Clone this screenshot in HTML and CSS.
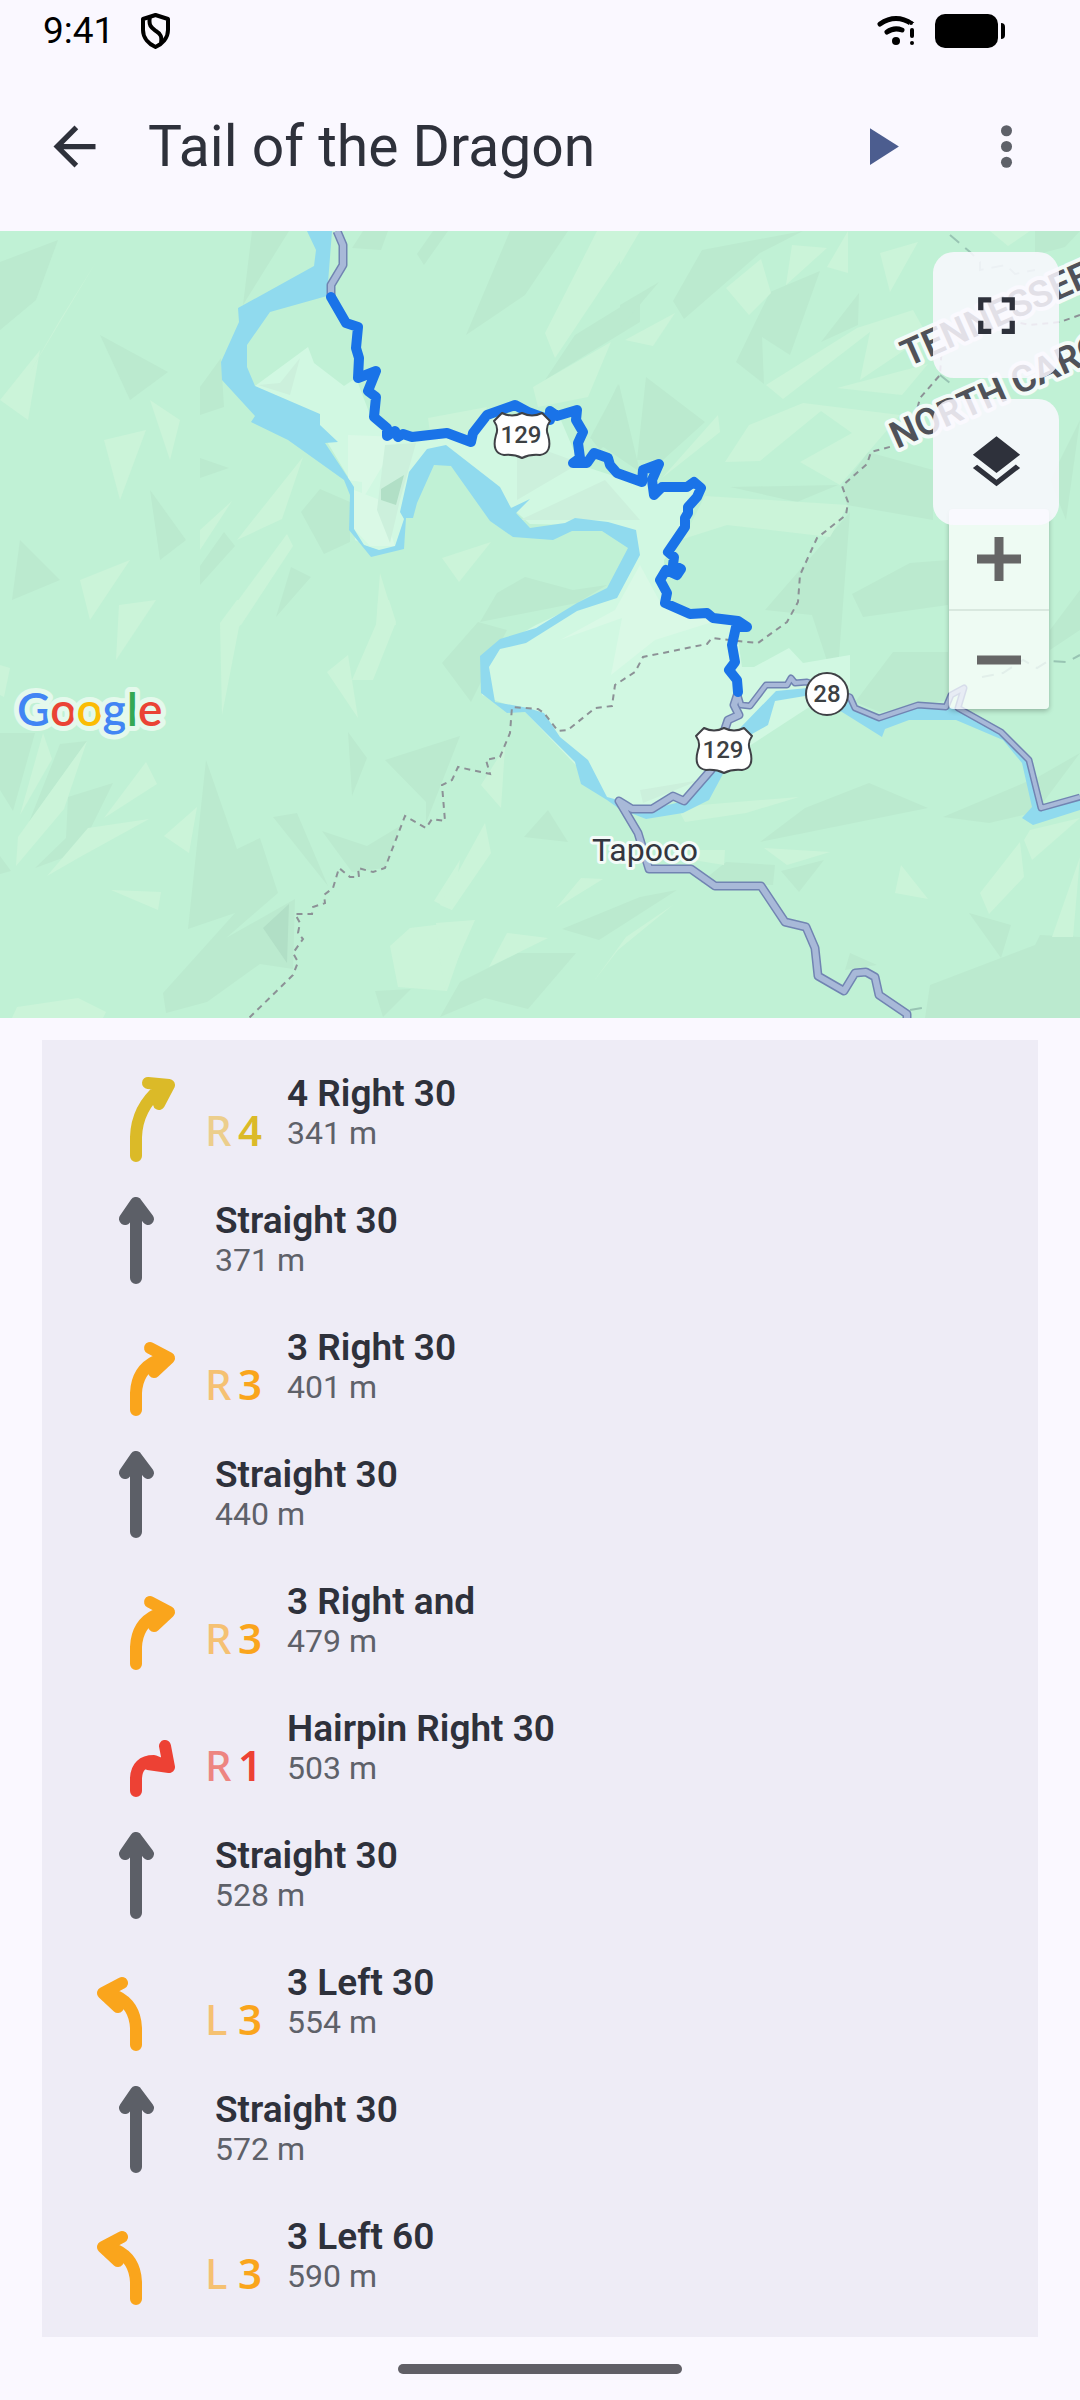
FILE: index.html
```
<!DOCTYPE html>
<html lang="en">
<head>
    <meta charset="UTF-8">
    <meta name="viewport" content="width=device-width, initial-scale=1.0">
    <title>Tail of the Dragon</title>
    <link rel="stylesheet" href="styles.css">
</head>
<body>
    <div class="status-bar">
        <span class="time">9:41</span>
        <svg class="shield-icon" width="31" height="36" viewBox="0 0 31 36">
            <path d="M15.500 2L28 6V17C28 25 22 31 15.500 34C9 31 3 25 3 17V6Z M10 4C8 13 12 15 16 18C21 21 22 24 21 30" fill="none" stroke="#000" stroke-width="4" stroke-linejoin="round"/>
        </svg>
        <div class="status-right">
            <svg width="40" height="34" viewBox="0 0 40 34">
                <path d="M4 10Q20 -1 36 10" fill="none" stroke="#000" stroke-width="5" stroke-linecap="round"/>
                <path d="M11 18Q18 13 26 16" fill="none" stroke="#000" stroke-width="5" stroke-linecap="round"/>
                <circle cx="20" cy="27" r="4"/>
                <path d="M33 9h9v23h-9z" fill="#faf8ff"/>
                <path d="M36 16V22" stroke="#000" stroke-width="4" stroke-linecap="round"/>
                <circle cx="36" cy="29" r="2"/>
                <circle cx="35" cy="9" r="2"/>
            </svg>
            <div class="battery"></div>
            <div class="battery-tip"></div>
        </div>
    </div>

    <header class="app-bar">
        <button class="bar-btn" aria-label="Back">
            <svg viewBox="0 0 24 24" fill="#2e313b"><path d="M20 11H7.830l5.590-5.590L12 4l-8 8 8 8 1.410-1.410L7.830 13H20v-2z"/></svg>
        </button>
        <h1>Tail of the Dragon</h1>
        <button class="bar-btn" aria-label="Play">
            <svg viewBox="0 0 24 24" fill="#4c5d8f"><path d="M8 5v14l11-7z"/></svg>
        </button>
        <button class="bar-btn more" aria-label="More options">
            <svg viewBox="0 0 24 24" fill="#5e6169"><circle cx="12" cy="6" r="2.100"/><circle cx="12" cy="12" r="2.100"/><circle cx="12" cy="18" r="2.100"/></svg>
        </button>
    </header>

    <div class="map">
        <svg class="map-canvas" viewBox="0 231 1080 787" preserveAspectRatio="xMidYMid slice">
            <!-- terrain -->
            <path class="dark" d="M252 231H289L243 305ZM363 231H388L381 250L352 248ZM433 231H448L424 265L417 254ZM510 231H568L525 295L466 335ZM640 295V322L545 380L575 335ZM619 384L640 472L590 438ZM200 387L221 358L224 407L200 415ZM320 489L350 502V542L324 554L301 512ZM291 567L311 577L276 617ZM525 577L573 590L607 585L577 603L480 622L497 593ZM200 566L224 532L235 546L200 585ZM200 458L229 468L200 478Z"/>
            <path class="dark" d="M0 733H35L13 811L0 790ZM60 744L87 741L29 822ZM68 797L113 783L79 852L35 868L66 838ZM206 760L237 849L260 838L278 893L226 938L235 913L188 929ZM295 899L293 969L260 964L207 1002L166 1013L163 993L235 913L226 938ZM273 817L297 813L328 886ZM322 831L367 846L400 826L385 868L352 872ZM348 732L367 758L352 796ZM385 760L460 736L426 823V802ZM375 991L411 989L383 1017ZM0 856L11 871L0 874Z"/>
            <path class="dark" d="M478 622L507 630L471 702L442 663ZM869 783L928 808L760 842L805 808ZM1080 753L1038 777L943 817L989 823L1036 812ZM726 862L775 865L773 885L700 883ZM781 871L824 860L799 892ZM640 897L677 890L599 940L562 929ZM518 953H576L528 1009L485 998L440 1017L460 982ZM969 913L1011 925L1001 958ZM1040 935L1080 937V1018H925L930 985L1035 945ZM850 953L877 965L845 970ZM893 652L948 652V700L880 712L855 702ZM548 810L524 837L568 842Z"/>
            <path class="dark" d="M702 250L803 231L760 253L684 319L673 301ZM620 305L659 282L620 328ZM820 271L790 355L762 337L764 384L736 362L770 292ZM859 293L858 325L821 342ZM646 377L705 422L663 460H637ZM618 384L610 440L600 450L592 440ZM730 487L838 485L797 502ZM868 452L933 470V520L847 505L842 488ZM850 512L765 610L812 615L830 670H838ZM852 594L910 563L948 560V605L863 617ZM1035 231H1080L1065 247L1035 255ZM1080 420L1066 520L1050 480ZM1080 590V630L1050 650V630Z"/>
            <path class="dark" d="M0 262L58 240L36 300L0 330ZM100 335L168 372L130 400ZM150 490L186 540L160 560ZM20 540L60 580L12 600Z"/>
            <path class="light" d="M597 231H640L555 358L545 333ZM533 387L611 342L588 397L538 407ZM232 501L200 550V530ZM303 457L282 519L237 540ZM287 534L293 546L241 625H220ZM442 558L491 542L459 582ZM380 573L396 625H376ZM428 418L487 407L470 440L430 432Z"/>
            <path class="light" d="M119 605L156 600L116 660ZM237 600H257L239 627L222 715L220 623ZM378 600H389L396 622L373 680H352L377 622ZM327 672L348 655L358 718ZM43 733L52 759L20 815ZM87 741L64 809L16 866L18 837ZM146 762L157 784L104 818ZM149 819L80 857L47 876L88 828ZM197 807L189 853L164 836ZM111 890L161 892L158 910ZM460 860L452 910L434 901ZM410 928L460 922V953L447 991L398 987L390 946ZM17 1007L78 998L106 1012L103 1018H12ZM0 665L10 668L4 697L0 695Z"/>
            <path class="light" d="M677 807L799 797L746 813L685 822ZM764 848L830 852L787 865ZM691 850H725L724 865L693 860ZM901 865L928 899L895 893ZM1020 842L1024 877L989 914L980 893ZM1030 830L1080 818L1032 860L1024 840ZM1080 857L1073 937H1052ZM485 823L491 853L452 910L440 905ZM673 905L618 950L594 981L626 937ZM475 920L444 990L436 923ZM603 879L556 908L581 878ZM505 747L481 785L501 808ZM507 933L548 938L489 967Z"/>
            <path class="light" d="M792 245L827 248L786 285ZM880 253L918 242L890 292ZM761 259L771 293L749 315L726 288ZM848 231V273L827 267ZM675 313L653 346L625 340ZM766 385L857 328L913 310L927 335L860 380L870 332L783 399ZM837 388L928 364L902 395ZM725 462L749 425L803 403L900 415L840 485L800 462L852 433L821 411L760 461ZM718 415L720 432L662 478ZM705 496L848 505L830 537L727 525L683 539ZM620 231H640L620 265ZM990 231H1030L1008 246Z"/>
            <path class="light" d="M0 400L40 350L28 420ZM96 262L60 320L30 372ZM104 440L146 430L120 500ZM150 400L180 420L170 460ZM80 580L130 560L90 620Z"/>

            <!-- valley -->
            <path class="valley" d="M255 386L308 347L314 363L344 386L356 378L372 420L400 437H470L490 418H560L580 465L620 478L702 488L685 530L664 560L665 603L735 618L742 667L754 667L789 648L803 663L850 655V690L820 700L720 765L680 800L640 812L615 806L525 712L482 695V656L536 625L610 590L635 550L630 530L575 525L530 524L446 450L430 455L405 515L400 548L380 553L355 540L350 480L320 430Z"/>
            <path class="valley-light" d="M348 435L400 437L380 470L362 500V482L348 480ZM354 490L380 500L395 546H370L354 529ZM640 565L615 610L560 640L622 618L611 675L655 640L725 618L660 602Z"/>
            <path class="valley-dark" d="M300 358L290 395L258 385L280 383ZM517 440L580 463L517 500ZM605 480L640 520H520ZM700 780L643 803L640 790ZM385 445L416 443L400 500L390 543L377 510Z"/>
            <path class="darker" d="M289 904L287 963L263 928ZM404 475L396 505L381 500V489Z"/>

            <!-- water -->
            <path class="water" d="M307 231L316 250L314 266L238 308L239 322L221 362L222 380L255 416L251 422L288 440L344 480L350 495L349 530L371 557L404 549L406 518L413 518L417 503L434 465L451 466L490 521L513 537L553 540L572 531H602L628 548L607 588L577 603L536 628L500 639L480 656L481 693L507 713L525 712L575 762L581 784L607 800L618 808V800L607 797L588 760L560 737L544 713L528 708L495 702L489 667L500 649L526 643L577 611L617 598L640 555L636 530L608 522L575 518L565 523L530 528L516 513L530 499L511 508L500 487L446 445L427 449L409 472L400 512L404 519L395 546L379 550L364 545L354 529V487L343 470L325 443L338 442L320 425V414L255 386L247 367V345L270 312L327 296L332 231Z"/>
            <path class="water" d="M628 812L646 819L683 813L709 800L724 772L752 734L768 725L775 701L805 696L842 712L882 737L885 729L909 720H956L1003 740L1022 763L1032 807L1022 818L1033 825L1080 810V797L1041 808L1029 760L1001 732L958 708L918 705L879 718L855 708L846 688H808L776 691L741 727L711 770L684 801L652 809Z"/>

            <!-- state line -->
            <path class="border" d="M1080 315L1060 322L1030 325L1005 320L942 345L940 375L920 398L917 410L893 446L871 452L867 464L842 486L848 502L846 515L817 538L800 575L798 602L787 622L758 643L738 641L712 638L707 644L643 657L635 672L615 685L612 706L595 708L568 730L558 731L544 713L538 709L512 707L510 733L500 757L486 760L490 774L458 767L452 780L442 785L445 821L432 819L426 828L405 816L385 868L373 872L358 868L359 877H350L339 868L333 888L324 895L325 903L313 907L312 914H295L300 923L298 933L303 939L293 953L298 962L293 975L248 1019"/>
            <path class="trail" d="M950 235L970 252L980 262V270L1006 265L1015 274L1035 270M940 375L955 387M982 677L1003 673L1023 660L1037 668L1048 661L1067 662L1080 655M910 1010L928 1007"/>

            <!-- roads -->
            <path class="road-edge thin" d="M738 695L741 705L750 706L766 685H787L791 678L795 683L807 682L850 697L855 708L879 718L918 705L946 707L951 695L964 688L958 708L1001 732L1029 760L1041 808L1080 797"/>
            <path class="road-edge" d="M337 231L343 245V265L331 285V297M738 693L734 705L739 715L728 720L711 770L684 801L673 796L652 809H632L619 801L638 833L649 869H691L715 886H761L785 922L806 927L815 948L818 976L844 991L855 973L866 972L875 977L879 995L907 1014V1020"/>
            <path class="road thin" d="M738 695L741 705L750 706L766 685H787L791 678L795 683L807 682L850 697L855 708L879 718L918 705L946 707L951 695L964 688L958 708L1001 732L1029 760L1041 808L1080 797"/>
            <path class="road" d="M337 231L343 245V265L331 285V297M738 693L734 705L739 715L728 720L711 770L684 801L673 796L652 809H632L619 801L638 833L649 869H691L715 886H761L785 922L806 927L815 948L818 976L844 991L855 973L866 972L875 977L879 995L907 1014V1020"/>

            <!-- route -->
            <path class="route" d="M331 297L346 323L358 327L356 348L359 358L358 378L376 371L368 391L376 397L374 417L387 428V436L395 431L398 437L403 434L412 437L447 433L471 442L473 433L487 415L515 405L528 412L550 420V411L557 416L577 410L576 420L583 432L578 443L580 458L573 463H587L594 453L608 458L610 465L617 473L642 482L643 470L659 464L652 480L654 495L662 487H687L694 482L701 488L697 497L688 507V513L685 518V527L668 552L674 557L673 565L681 569L677 575L666 570L660 580L667 593L665 603L690 614L707 613L713 618L738 621L747 627H736L732 645L735 662L729 670L737 680L738 692"/>

            <!-- highway shields -->
            <g>
                <path class="sign" d="M502 413Q512 418 522 413Q532 418 542 413L550 421Q545 428 548 435Q553 453 540 455Q530 454 522 458Q514 454 504 455Q491 453 496 435Q499 428 494 421Z"/>
                <text class="sign-text" x="521" y="443">129</text>
            </g>
            <g transform="translate(202 315)">
                <path class="sign" d="M502 413Q512 418 522 413Q532 418 542 413L550 421Q545 428 548 435Q553 453 540 455Q530 454 522 458Q514 454 504 455Q491 453 496 435Q499 428 494 421Z"/>
                <text class="sign-text" x="521" y="443">129</text>
            </g>
            <circle class="sign" cx="827" cy="694" r="21"/>
            <text class="sign-text" x="827" y="702">28</text>

            <text class="place" x="592" y="861">Tapoco</text>
            <text class="state" transform="translate(908 367) rotate(-24)">TENNESSEE</text>
            <text class="state" transform="translate(897 449) rotate(-24)">NORTH CAROLINA</text>
            <text class="google" x="17" y="726"><tspan fill="#4285f4">G</tspan><tspan fill="#ea4335">o</tspan><tspan fill="#fbbc05">o</tspan><tspan fill="#4285f4">g</tspan><tspan fill="#34a853">l</tspan><tspan fill="#ea4335">e</tspan></text>
        </svg>

        <div class="zoom-control">
            <button aria-label="Zoom in"><svg width="44" height="44" viewBox="0 0 44 44"><path d="M0 22H44M22 0V44" stroke="#666" stroke-width="9"/></svg></button>
            <button aria-label="Zoom out"><svg width="44" height="44" viewBox="0 0 44 44"><path d="M0 22H44" stroke="#666" stroke-width="9"/></svg></button>
        </div>
        <div class="map-actions">
            <button aria-label="Full screen">
                <svg viewBox="0 0 24 24" fill="#2e313b"><path d="M7 14H5v5h5v-2H7v-3zM5 10h2V7h3V5H5v5zM17 17h-3v2h5v-5h-2v3zM14 5v2h3v3h2V5h-5z"/></svg>
            </button>
            <button aria-label="Map layers">
                <svg viewBox="0 0 24 24" fill="#2e313b"><path d="M11.990 18.540l-7.370-5.730L3 14.070l9 7 9-7-1.630-1.270zM12 16l7.360-5.730L21 9l-9-7-9 7 1.630 1.270z"/></svg>
            </button>
        </div>
    </div>

    <!-- arrows shared by the pace notes -->
    <svg class="defs" width="0" height="0">
        <symbol id="straight" viewBox="0 0 96 127"><path d="M48 101V26M37 42L48 26L60 42M42 36H54"/></symbol>
        <symbol id="turn4" viewBox="0 0 96 127"><path d="M48 106V87Q49 58 72 39L81 35M60 33L81 35L71 54L69 42"/></symbol>
        <symbol id="turn3" viewBox="0 0 96 127"><path d="M48 106V89Q49 66 68 57L81 54M62 44L81 54L66 68V60"/></symbol>
        <symbol id="turn1" viewBox="0 0 96 127"><path d="M48 106V93Q49 76 66 76L81 82M77 61L81 82L60 79"/></symbol>
    </svg>

    <ul class="notes">
        <li class="yellow">
            <svg class="arrow"><use href="#turn4"/></svg>
            <div class="badge"><span>R</span><b>4</b></div>
            <div class="info"><h2>4 Right 30</h2><p>341 m</p></div>
        </li>
        <li class="gray">
            <svg class="arrow"><use href="#straight"/></svg>
            <div class="info"><h2>Straight 30</h2><p>371 m</p></div>
        </li>
        <li class="orange">
            <svg class="arrow"><use href="#turn3"/></svg>
            <div class="badge"><span>R</span><b>3</b></div>
            <div class="info"><h2>3 Right 30</h2><p>401 m</p></div>
        </li>
        <li class="gray">
            <svg class="arrow"><use href="#straight"/></svg>
            <div class="info"><h2>Straight 30</h2><p>440 m</p></div>
        </li>
        <li class="orange">
            <svg class="arrow"><use href="#turn3"/></svg>
            <div class="badge"><span>R</span><b>3</b></div>
            <div class="info"><h2>3 Right and</h2><p>479 m</p></div>
        </li>
        <li class="red">
            <svg class="arrow"><use href="#turn1"/></svg>
            <div class="badge"><span>R</span><b>1</b></div>
            <div class="info"><h2>Hairpin Right 30</h2><p>503 m</p></div>
        </li>
        <li class="gray">
            <svg class="arrow"><use href="#straight"/></svg>
            <div class="info"><h2>Straight 30</h2><p>528 m</p></div>
        </li>
        <li class="orange">
            <svg class="arrow left"><use href="#turn3"/></svg>
            <div class="badge"><span>L</span><b>3</b></div>
            <div class="info"><h2>3 Left 30</h2><p>554 m</p></div>
        </li>
        <li class="gray">
            <svg class="arrow"><use href="#straight"/></svg>
            <div class="info"><h2>Straight 30</h2><p>572 m</p></div>
        </li>
        <li class="orange">
            <svg class="arrow left"><use href="#turn3"/></svg>
            <div class="badge"><span>L</span><b>3</b></div>
            <div class="info"><h2>3 Left 60</h2><p>590 m</p></div>
        </li>
    </ul>

    <div class="nav-bar"><div class="handle"></div></div>
</body>
</html>
```
FILE: styles.css
```
body {
    margin: 0;
    background-color: #faf8ff;
    color: #2e313b;
    font-family: Roboto, "Liberation Sans", sans-serif;
}
h1, h2, p, ul {
    margin: 0;
    padding: 0;
}
button {
    border: 0;
    padding: 0;
    background: none;
    display: flex;
    align-items: center;
    justify-content: center;
    cursor: pointer;
}
.defs {
    position: absolute;
}

/* status bar */
.status-bar {
    display: flex;
    align-items: center;
    height: 62px;
    padding: 0 75px 0 43px;
    color: #000;
}
.time {
    font-size: 37px;
    line-height: 42px;
}
.shield-icon {
    margin-left: 26px;
}
.status-right {
    display: flex;
    align-items: center;
    margin-left: auto;
}
.battery {
    width: 63px;
    height: 34px;
    margin-left: 19px;
    border-radius: 10px;
    background-color: #000;
}
.battery-tip {
    width: 4px;
    height: 16px;
    margin-left: 3px;
    border-radius: 0 4px 4px 0;
    background-color: #000;
}

/* app bar */
.app-bar {
    display: flex;
    align-items: center;
    height: 169px;
    padding: 0 42px 0 43px;
}
.app-bar h1 {
    flex: 1;
    margin-left: 42px;
    font-size: 57px;
    font-weight: 400;
    line-height: 72px;
}
.bar-btn svg {
    display: block;
    width: 63px;
    height: 63px;
}
.bar-btn.more {
    margin-left: 63px;
}

/* map */
.map {
    position: relative;
    height: 787px;
    overflow: hidden;
    background-color: #c0f1d5;
}
.map-canvas {
    display: block;
    width: 100%;
    height: 100%;
}
.dark { fill: #bbeacf; }
.darker { fill: #b1dfc6; }
.light { fill: #cbf4d9; }
.valley { fill: #d1f8e2; }
.valley-light { fill: #daf9e6; }
.valley-dark { fill: #ccf0dc; }
.water { fill: #90daee; }
.border, .trail {
    fill: none;
    stroke: #8c9196;
    stroke-width: 2;
    stroke-dasharray: 6 5;
}
.trail {
    stroke: #98c4b3;
    stroke-dasharray: 12 8;
}
.road-edge, .road, .route {
    fill: none;
    stroke-linejoin: round;
}
.road-edge {
    stroke: #7184b2;
    stroke-width: 9;
}
.road {
    stroke: #a8b9d8;
    stroke-width: 6;
}
.road-edge.thin {
    stroke-width: 7;
}
.road.thin {
    stroke-width: 4;
}
.route {
    stroke: #1a73e8;
    stroke-width: 10;
    stroke-linecap: round;
}
.sign {
    fill: #fff;
    stroke: #3f4146;
    stroke-width: 2;
    stroke-linejoin: round;
}
.sign-text {
    font-size: 24px;
    font-weight: 500;
    fill: #3c4043;
    text-anchor: middle;
}
.place, .state, .google {
    stroke: #f3fbf8;
    stroke-linejoin: round;
    paint-order: stroke;
}
.place {
    font-size: 32px;
    fill: #33363f;
    stroke-width: 6;
}
.state {
    font-size: 37px;
    font-weight: 600;
    fill: #505259;
    stroke-width: 8;
}
.google {
    font-family: Lato, sans-serif;
    font-size: 46px;
    font-weight: 600;
    stroke: #e4f9ec;
    stroke-width: 10;
}
.map-actions {
    position: absolute;
    top: 21px;
    right: 21px;
    display: flex;
    flex-direction: column;
    gap: 21px;
}
.map-actions button {
    width: 126px;
    height: 126px;
    border-radius: 21px;
    background-color: rgba(250, 248, 255, 0.86);
}
.map-actions svg {
    width: 63px;
    height: 63px;
}
.zoom-control {
    position: absolute;
    top: 278px;
    right: 31px;
    border-radius: 4px;
    background-color: rgba(255, 255, 255, 0.72);
    box-shadow: 0 2px 5px rgba(0, 0, 0, 0.25);
}
.zoom-control button {
    width: 100px;
    height: 100px;
}
.zoom-control button + button {
    border-top: 2px solid #d9e8df;
}

/* pace notes */
.notes {
    margin: 22px 42px 0;
    padding: 10px 46px 17px;
    background-color: #eeecf6;
    list-style: none;
}
.notes li {
    display: flex;
    height: 127px;
}
.arrow {
    width: 96px;
    height: 127px;
    fill: none;
    stroke: currentColor;
    stroke-width: 12;
    stroke-linecap: round;
    stroke-linejoin: round;
}
.arrow.left {
    transform: scaleX(-1);
}
.badge {
    display: flex;
    align-self: flex-end;
    width: 82px;
    margin-left: 21px;
    padding-bottom: 22px;
    font-family: "Noto Sans", sans-serif;
    font-size: 42px;
    line-height: 50px;
}
.badge span {
    width: 33px;
    font-weight: 500;
    opacity: 0.6;
}
.yellow .badge span {
    color: #ebbb46;
}
.badge b {
    font-weight: 600;
}
.info {
    padding-top: 23px;
}
.gray .info {
    margin-left: 31px;
}
.info h2 {
    color: #2e313b;
    font-size: 37px;
    font-weight: 600;
    line-height: 42px;
}
.info p {
    color: #5e6169;
    font-size: 32px;
    line-height: 36px;
}
.yellow { color: #dbba28; }
.orange { color: #faa51c; }
.red { color: #ed4134; }
.gray { color: #5c5f67; }

/* gesture bar */
.nav-bar {
    display: flex;
    justify-content: center;
    padding: 27px 0 26px;
}
.handle {
    width: 284px;
    height: 10px;
    border-radius: 5px;
    background-color: #605f66;
}
```
